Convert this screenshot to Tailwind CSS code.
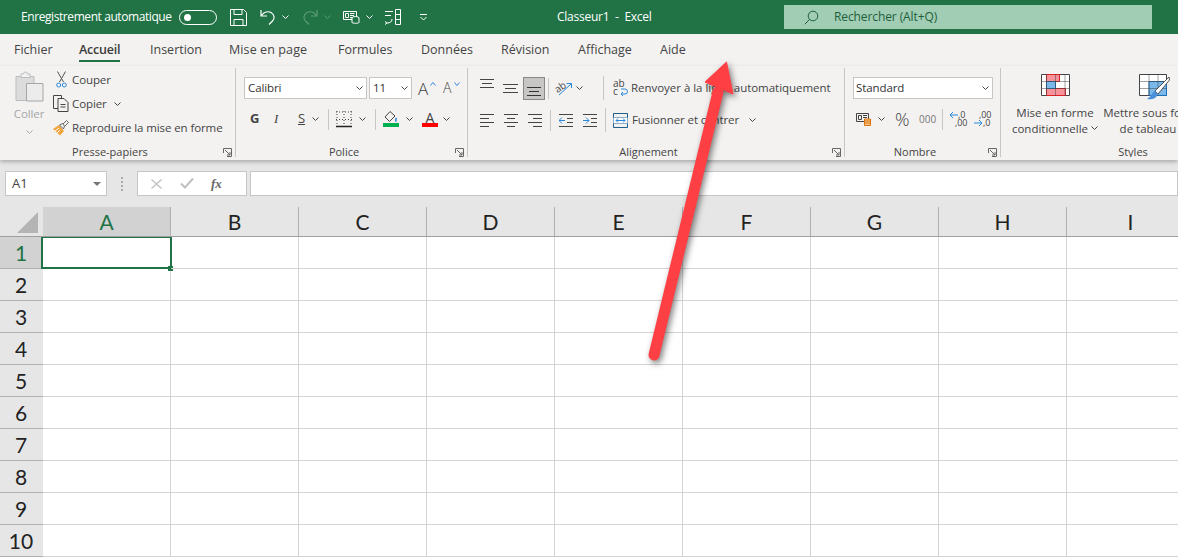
<!DOCTYPE html>
<html lang="fr">
<head>
<meta charset="UTF-8">
<title>Classeur1 - Excel</title>
<script src="https://cdn.jsdelivr.net/npm/@tailwindcss/browser@4"></script>
</head>
<body class="relative w-[1178px] h-[560px] overflow-hidden bg-white font-['Open_Sans',sans-serif] text-[12px] text-[#444]">

<!-- Title bar -->
<div class="flex items-center h-[34px] bg-[#217346] text-white">
  <div class="flex items-center w-[557px] h-full pl-[21px]">
    <span class="w-[158px] tracking-[-0.42px] whitespace-nowrap">Enregistrement automatique</span>
    <div class="flex items-center w-[38px] h-[15px] rounded-full border border-white pl-[4px]"><div class="w-[7px] h-[7px] rounded-full bg-white"></div></div>
    <svg class="ml-[13px]" width="17" height="17" viewBox="0 0 17 17" fill="none" stroke="#fff"><path d="M.5.5h13l3 3v13H.5z M4 .5v5h8v-5 M4 16.5v-6h9v6"/></svg>
    <svg class="ml-[13px]" width="16" height="16" viewBox="0 0 16 16" fill="none" stroke="#fff" stroke-width="1.2"><path d="M1 1v6h6 M1.500 6.500C4 3 8 2 11 3.500c3.500 2 4 6 1.500 8.500L9 15.500"/></svg>
    <svg class="ml-[6px]" width="7" height="4" viewBox="0 0 7 4" fill="none" stroke="#fff"><path d="M.5.5l3 3 3-3"/></svg>
    <svg class="ml-[13px]" width="16" height="16" viewBox="0 0 16 16" fill="none" stroke="#5c9b78" stroke-width="1.2"><path d="M15 1v6H9 M14.500 6.500C12 3 8 2 5 3.500c-3.500 2-4 6-1.500 8.500L7 15.500"/></svg>
    <svg class="ml-[6px]" width="7" height="4" viewBox="0 0 7 4" fill="none" stroke="#5c9b78"><path d="M.5.500l3 3 3-3"/></svg>
    <svg class="ml-[12px]" width="17" height="14" viewBox="0 0 17 14" fill="none" stroke="#fff"><path d="M.5 1.500h13v8H.5z M2.500 3.500h3v4h-3z M7 3.500h4.500 M7 5.500h4 M7 7.500h2"/><ellipse cx="12.500" cy="8" rx="3.500" ry="1.500" fill="#217346"/><path d="M9 8v4.500c0 1 7 1 7 0V8" fill="#217346"/></svg>
    <svg class="ml-[6px]" width="7" height="4" viewBox="0 0 7 4" fill="none" stroke="#fff"><path d="M.5.500l3 3 3-3"/></svg>
    <svg class="ml-[11px]" width="17" height="16" viewBox="0 0 17 16" fill="none" stroke="#fff"><path d="M1 2.500h8 M1 6.500h6 M11.500.5h5v15h-5z M11.500 5.500h5 M11.500 10.500h5 M8 10c0 3-2 4-5 4 M1 12.500l2 1.500-2 1.500"/></svg>
    <svg class="ml-[18px]" width="9" height="7" viewBox="0 0 9 7" fill="none" stroke="#fff"><path d="M1 .5h7 M1.500 3l3 3 3-3"/></svg>
  </div>
  <div class="w-[227px] tracking-[-0.25px] whitespace-pre">Classeur1  -  Excel</div>
  <div class="flex items-center w-[368px] h-[24px] bg-[#a0cdb3] text-[#1f5f3c] tracking-[-0.1px]">
    <svg class="ml-[20px] mr-[15px]" width="15" height="15" viewBox="0 0 15 15" fill="none" stroke="#1f5f3c"><circle cx="9" cy="6" r="4.800"/><path d="M5.500 9.500L.8 14.200"/></svg>
    <span>Rechercher (Alt+Q)</span>
  </div>
</div>

<!-- Ribbon tabs -->
<div class="flex h-[32px] pl-[14px] pt-[7px] bg-[#f3f2f1] text-[12.500px] whitespace-nowrap">
  <span class="w-[65px]">Fichier</span>
  <span class="w-[71px]"><span class="inline-block h-[21px] border-b-[2px] border-[#217346] font-semibold text-[#3b3b3b] tracking-[-0.2px]">Accueil</span></span>
  <span class="w-[79px]">Insertion</span>
  <span class="w-[109px] tracking-[0.1px]">Mise en page</span>
  <span class="w-[83px]">Formules</span>
  <span class="w-[80px]">Données</span>
  <span class="w-[77px]">Révision</span>
  <span class="w-[82px]">Affichage</span>
  <span>Aide</span>
</div>

<!-- Ribbon -->
<div class="relative z-10 flex h-[94px] pt-[2px] bg-[#f3f2f1] shadow-[0_2px_4px_rgba(0,0,0,0.25)] text-[11.500px] tracking-[-0.1px] whitespace-nowrap">

  <!-- Presse-papiers -->
  <div class="flex flex-col shrink-0 w-[236px] h-[89px] border-r border-[#c8c6c4]">
    <div class="flex flex-1">
      <div class="flex flex-col items-center w-[53px] pl-[5px] pt-[3px] text-[#a6a6a6]">
        <svg width="29" height="32" viewBox="0 0 29 32" fill="none"><path d="M1 5.500h18v24H1z" fill="#dcdcdc" stroke="#bdbdbd"/><path d="M6 5.500V3h2.500a2 2 0 0 1 4 0H15v3.500H6z" fill="#f3f2f1" stroke="#bdbdbd"/><path d="M11.500 12.500h16.500v17.500H11.500z" fill="#ececec" stroke="#a6a6a6"/></svg>
        <span class="mt-[2px]">Coller</span>
        <svg class="mt-[8px]" width="7" height="4" viewBox="0 0 7 4" fill="none" stroke="#a6a6a6"><path d="M.5.500l3 3 3-3"/></svg>
      </div>
      <div class="flex flex-col gap-[5px] pt-[2px]">
        <div class="flex items-center h-[19px]">
          <svg class="ml-[3px] mr-[5px]" width="11" height="17" viewBox="0 0 11 17" fill="none"><path d="M1.500.5L7.500 11 M9.500.5L3.500 11" stroke="#555"/><circle cx="2.700" cy="14" r="2" stroke="#2b88d8"/><circle cx="8.300" cy="14" r="2" stroke="#2b88d8"/></svg>
          <span>Couper</span>
        </div>
        <div class="flex items-center h-[19px]">
          <svg class="mr-[3px]" width="16" height="17" viewBox="0 0 16 17" fill="none" stroke="#444"><path d="M5 13.500H.5V.5h8v3"/><path d="M5 3.500h6l4 4v9H5z M7.500 9.500h5 M7.500 12h5"/></svg>
          <span>Copier</span>
          <svg class="ml-[7px]" width="7" height="4" viewBox="0 0 7 4" fill="none" stroke="#444"><path d="M.5.500l3 3 3-3"/></svg>
        </div>
        <div class="flex items-center h-[19px]">
          <svg class="mr-[3px]" width="16" height="16" viewBox="0 0 16 16"><path d="M0 9l6-4 5 6-4 4.500z" fill="#f2a33a"/><path d="M2 11l4-3 M4 13l3-3" stroke="#fff"/><path d="M6.500 5l3-1.500 2 2.500-1 3z" fill="#f3f2f1" stroke="#666"/><path d="M10 4l3.500-3.500 2 2L12 6" fill="none" stroke="#666"/></svg>
          <span>Reproduire la mise en forme</span>
        </div>
      </div>
    </div>
    <div class="flex items-center h-[12px] pt-[2px] text-[11px] tracking-normal">
      <span class="flex-1 pr-[3px] text-center">Presse-papiers</span>
      <svg class="mr-[3px]" width="9" height="9" viewBox="0 0 9 9" fill="none" stroke="#666"><path d="M.5 5V.5h8v8H4 M2 2l5 5 M7 4v3H4"/></svg>
    </div>
  </div>

  <!-- Police -->
  <div class="flex flex-col shrink-0 w-[232px] h-[89px] border-r border-[#c8c6c4]">
    <div class="flex-1 pl-[8px] pt-[9px]">
      <div class="flex items-center h-[22px]">
        <div class="flex items-center justify-between w-[123px] h-full px-[3px] bg-white border border-[#c8c6c4] text-[#333]">Calibri
          <svg width="7" height="4" viewBox="0 0 7 4" fill="none" stroke="#444"><path d="M.5.500l3 3 3-3"/></svg></div>
        <div class="flex items-center justify-between w-[43px] h-full ml-[2px] px-[3px] bg-white border border-[#c8c6c4] text-[#333]">11
          <svg width="7" height="4" viewBox="0 0 7 4" fill="none" stroke="#444"><path d="M.5.500l3 3 3-3"/></svg></div>
        <span class="ml-[6px] w-[11px] text-[17px] leading-none font-light">A</span>
        <svg class="mb-[9px] ml-[1px]" width="6" height="4" viewBox="0 0 6 4" fill="none" stroke="#2b88d8"><path d="M.5 3.500l2.500-3 2.500 3"/></svg>
        <span class="ml-[7px] w-[10px] text-[14px] leading-none font-light">A</span>
        <svg class="mb-[9px] ml-[1px]" width="6" height="4" viewBox="0 0 6 4" fill="none" stroke="#2b88d8"><path d="M.5.500l2.500 3 2.500-3"/></svg>
      </div>
      <div class="flex items-center h-[22px] mt-[9px] text-[#444]">
        <span class="ml-[6px] w-[24px] text-[13px] font-bold">G</span>
        <span class="w-[24px] text-[13px] italic font-['Liberation_Serif',serif]">I</span>
        <span class="w-[14px] text-[13px] underline">S</span>
        <svg class="mr-[9px]" width="7" height="4" viewBox="0 0 7 4" fill="none" stroke="#444"><path d="M.5.500l3 3 3-3"/></svg>
        <div class="w-px h-[21px] bg-[#c8c6c4] mr-[7px]"></div>
        <svg width="16" height="17" viewBox="0 0 16 17" fill="none" stroke="#444"><path d="M0 1h16M0 8.500h16M8 0v15M1 0v15M15 0v15" stroke-dasharray="1 2"/><path d="M0 15.500h16" stroke-width="1.500" stroke="#222"/></svg>
        <svg class="ml-[7px] mr-[9px]" width="7" height="4" viewBox="0 0 7 4" fill="none" stroke="#444"><path d="M.5.500l3 3 3-3"/></svg>
        <div class="w-px h-[21px] bg-[#c8c6c4] mr-[7px]"></div>
        <div class="flex flex-col items-center w-[16px]">
          <svg width="14" height="12" viewBox="0 0 14 12" fill="none"><path d="M6 .5L1 6l4.500 4.500L11 5z" stroke="#444"/><path d="M12.500 7c-1 1.500-1 3 0 3.500" stroke="#2b88d8" stroke-width="1.500"/></svg>
          <div class="w-full h-[4px] bg-[#00b050]"></div>
        </div>
        <svg class="ml-[7px] mr-[9px]" width="7" height="4" viewBox="0 0 7 4" fill="none" stroke="#444"><path d="M.5.500l3 3 3-3"/></svg>
        <div class="flex flex-col items-center w-[16px]">
          <span class="h-[12px] text-[14px] leading-[13px]">A</span>
          <div class="w-full h-[4px] bg-[#ff0000]"></div>
        </div>
        <svg class="ml-[5px]" width="7" height="4" viewBox="0 0 7 4" fill="none" stroke="#444"><path d="M.5.500l3 3 3-3"/></svg>
      </div>
    </div>
    <div class="flex items-center h-[12px] pt-[2px] text-[11px] tracking-normal">
      <span class="flex-1 pr-[3px] text-center">Police</span>
      <svg class="mr-[3px]" width="9" height="9" viewBox="0 0 9 9" fill="none" stroke="#666"><path d="M.5 5V.5h8v8H4 M2 2l5 5 M7 4v3H4"/></svg>
    </div>
  </div>

  <!-- Alignement -->
  <div class="flex flex-col shrink-0 w-[377px] h-[89px] border-r border-[#c8c6c4]">
    <div class="flex-1 pl-[12px] pt-[8px]">
      <div class="flex items-center h-[24px]">
        <svg width="14" height="9" class="mb-[9px]" viewBox="0 0 14 9" stroke="#444"><path d="M0 .5h14M2 4.500h10M0 8.500h14"/></svg>
        <svg width="15" height="9" class="ml-[9px]" viewBox="0 0 15 9" stroke="#444"><path d="M0 .5h15M2 4.500h11M0 8.500h15"/></svg>
        <div class="flex items-end justify-center w-[22px] h-[23px] ml-[5px] pb-[3px] bg-[#c8c6c4] border border-[#8a8886]"><svg width="14" height="9" viewBox="0 0 14 9" stroke="#333"><path d="M0 .5h14M2 4.500h10M0 8.500h14"/></svg></div>
        <div class="w-px h-[21px] ml-[3px] bg-[#c8c6c4]"></div>
        <svg class="ml-[7px] overflow-visible" width="17" height="17" viewBox="0 0 17 17" fill="none"><text x="-1" y="11" font-size="10" fill="#444" transform="rotate(-35 4 8)">ab</text><path d="M3 15L15 4 M10.500 3.500H15.500V8" stroke="#2b88d8"/></svg>
        <svg class="ml-[3px]" width="7" height="4" viewBox="0 0 7 4" fill="none" stroke="#444"><path d="M.5.500l3 3 3-3"/></svg>
        <div class="w-px h-[24px] ml-[20px] bg-[#c8c6c4]"></div>
        <svg class="ml-[9px] mr-[3px] overflow-visible" width="15" height="16" viewBox="0 0 15 16" fill="none"><text x="0" y="7" font-size="10" fill="#444">ab</text><text x="0" y="15" font-size="10" fill="#444">c</text><path d="M8 14h4a2.500 2.500 0 0 0 0-5H8 M10 12l-2 2 2 2" stroke="#2b88d8"/></svg>
        <span class="tracking-[-0.03px]">Renvoyer à la ligne automatiquement</span>
      </div>
      <div class="flex items-center h-[24px] mt-[8px]">
        <svg width="14" height="13" viewBox="0 0 14 13" stroke="#444"><path d="M0 .5h14M0 4.500h9M0 8.500h14M0 12.500h9"/></svg>
        <svg width="14" height="13" class="ml-[10px]" viewBox="0 0 14 13" stroke="#444"><path d="M0 .5h14M3 4.500h8M0 8.500h14M3 12.500h8"/></svg>
        <svg width="14" height="13" class="ml-[10px]" viewBox="0 0 14 13" stroke="#444"><path d="M0 .5h14M5 4.500h9M0 8.500h14M5 12.500h9"/></svg>
        <div class="w-px h-[21px] ml-[8px] bg-[#c8c6c4]"></div>
        <svg class="ml-[8px]" width="14" height="13" viewBox="0 0 14 13" fill="none"><path d="M0 .5h14M8 4.500h6M8 8.500h6M0 12.500h14" stroke="#444"/><path d="M6 6.500H0M3 3.500l-3 3 3 3" stroke="#2b88d8"/></svg>
        <svg class="ml-[10px]" width="14" height="13" viewBox="0 0 14 13" fill="none"><path d="M0 .5h14M8 4.500h6M8 8.500h6M0 12.500h14" stroke="#444"/><path d="M0 6.500h6M3 3.500l3 3-3 3" stroke="#2b88d8"/></svg>
        <div class="w-px h-[24px] ml-[8px] bg-[#c8c6c4]"></div>
        <svg class="ml-[7px] mr-[4px]" width="15" height="15" viewBox="0 0 15 15" fill="none"><path d="M.5.5h14v14H.5z M.5 4.500h14 M.5 10.500h14" stroke="#1c5f8f"/><path d="M.5 4.500h14v6H.5z" fill="#fff"/><path d="M3 7.500h9M5 5.500l-2 2 2 2M10 5.500l2 2-2 2" stroke="#2b88d8"/></svg>
        <span>Fusionner et centrer</span>
        <svg class="ml-[10px]" width="7" height="4" viewBox="0 0 7 4" fill="none" stroke="#444"><path d="M.5.500l3 3 3-3"/></svg>
      </div>
    </div>
    <div class="flex items-center h-[12px] pt-[2px] text-[11px] tracking-normal">
      <span class="flex-1 pr-[3px] text-center">Alignement</span>
      <svg class="mr-[3px]" width="9" height="9" viewBox="0 0 9 9" fill="none" stroke="#666"><path d="M.5 5V.5h8v8H4 M2 2l5 5 M7 4v3H4"/></svg>
    </div>
  </div>

  <!-- Nombre -->
  <div class="flex flex-col shrink-0 w-[156px] h-[89px] border-r border-[#c8c6c4]">
    <div class="flex-1 pl-[8px] pt-[9px]">
      <div class="flex items-center justify-between w-[140px] h-[22px] px-[2px] pr-[3px] bg-white border border-[#c8c6c4] text-[#333]">Standard
        <svg width="7" height="4" viewBox="0 0 7 4" fill="none" stroke="#444"><path d="M.5.500l3 3 3-3"/></svg></div>
      <div class="flex items-center h-[22px] mt-[9px]">
        <svg class="ml-[3px]" width="16" height="14" viewBox="0 0 16 14" fill="none"><path d="M.5 1.500h12v8H.5z M2.500 3.500h3v4h-3z M7 3.500h4 M7 5.500h4" stroke="#444"/><path d="M8.500 7h6v6.500h-6z" fill="#f9c98a" stroke="#d9730d"/><path d="M8.500 9h6M8.500 11h6" stroke="#d9730d"/></svg>
        <svg class="ml-[6px]" width="7" height="4" viewBox="0 0 7 4" fill="none" stroke="#444"><path d="M.5.500l3 3 3-3"/></svg>
        <span class="ml-[10px] w-[24px] text-[18px] leading-none font-light">%</span>
        <span class="w-[23px] text-[10px] text-[#777] tracking-normal">000</span>
        <div class="w-px h-[21px] bg-[#c8c6c4]"></div>
        <svg class="ml-[7px] overflow-visible" width="16" height="16" viewBox="0 0 16 16" fill="none"><text x="8" y="7" font-size="9" fill="#444">,0</text><text x="5" y="15" font-size="9" fill="#444">,00</text><path d="M8 4H0M3 1L0 4l3 3" stroke="#2b88d8"/></svg>
        <svg class="ml-[8px] overflow-visible" width="16" height="16" viewBox="0 0 16 16" fill="none"><text x="5" y="7" font-size="9" fill="#444">,00</text><text x="9" y="15" font-size="9" fill="#444">,0</text><path d="M0 12h8M5 9l3 3-3 3" stroke="#2b88d8"/></svg>
      </div>
    </div>
    <div class="flex items-center h-[12px] pt-[2px] text-[11px] tracking-normal">
      <span class="flex-1 pr-[3px] text-center">Nombre</span>
      <svg class="mr-[3px]" width="9" height="9" viewBox="0 0 9 9" fill="none" stroke="#666"><path d="M.5 5V.5h8v8H4 M2 2l5 5 M7 4v3H4"/></svg>
    </div>
  </div>

  <!-- Styles -->
  <div class="flex flex-col shrink-0 w-[177px] h-[89px] overflow-hidden">
    <div class="flex flex-1 pt-[6px] text-center leading-[15.500px]">
      <div class="flex flex-col items-center shrink-0 w-[92px] ml-[8px]">
        <svg width="29" height="23" viewBox="0 0 29 23" fill="none"><path d="M.5.5h28v21H.5z" fill="#fff" stroke="#444"/><path d="M5.500.5h13v7h-13zM5.500 14.500h19v7h-19z" fill="#f7929a" stroke="#e02020"/><path d="M5.500 7.500h9v7h-9z" fill="#7ab8ea" stroke="#1c6fb8"/><path d="M5.500 0v22M14.500 0v22M24 0v22M0 7.500h29M0 14.500h29" stroke="#444" stroke-width=".5"/></svg>
        <span class="mt-[8px] tracking-normal">Mise en forme</span>
        <span class="flex items-center gap-[3px] tracking-normal">conditionnelle<svg width="7" height="4" viewBox="0 0 7 4" fill="none" stroke="#444"><path d="M.5.500l3 3 3-3"/></svg></span>
      </div>
      <div class="flex flex-col items-center shrink-0 w-[100px] ml-[2px]">
        <svg class="ml-[2px]" width="31" height="27" viewBox="0 0 31 27" fill="none"><path d="M.5.500h27v21H.5z" fill="#fff" stroke="#444"/><path d="M10 7.500h17.500v14H10z" fill="#7ab8ea" stroke="#1c6fb8"/><path d="M10 0v22M19 0v22M0 7.500h28M0 14.500h28" stroke="#444" stroke-width=".5"/><path d="M30 3L16 17l3 3L30.500 6z" fill="#fff" stroke="#555"/><path d="M8 25c4 1 9 0 11-5l-3-3c-3 1-3 5-8 8z" fill="#4a90d9"/></svg>
        <span class="mt-[4px] tracking-normal">Mettre sous forme</span>
        <span class="flex items-center gap-[3px] tracking-normal">de tableau<svg width="7" height="4" viewBox="0 0 7 4" fill="none" stroke="#444"><path d="M.5.500l3 3 3-3"/></svg></span>
      </div>
    </div>
    <div class="flex items-center justify-center h-[12px] pt-[2px] pl-[87px] text-[11px] tracking-normal">Styles</div>
  </div>
</div>

<!-- Formula bar -->
<div class="flex h-[47px] pt-[11px] bg-[#e6e6e6] text-[13px]">
  <div class="flex items-center justify-between w-[102px] h-[25px] ml-[5px] pl-[6px] pr-[5px] bg-white border border-[#c6c6c6]">A1
    <div class="w-0 h-0 border-x-[4px] border-x-transparent border-t-[4px] border-t-[#777]"></div>
  </div>
  <div class="flex flex-col items-center justify-center gap-[2px] w-[30px] h-[25px]">
    <div class="w-[2px] h-[2px] bg-[#aaa]"></div><div class="w-[2px] h-[2px] bg-[#aaa]"></div><div class="w-[2px] h-[2px] bg-[#aaa]"></div><div class="w-[2px] h-[2px] bg-[#aaa]"></div>
  </div>
  <div class="flex items-center w-[110px] h-[25px] pl-[13px] bg-white border border-[#c6c6c6]">
    <svg width="11" height="10" viewBox="0 0 11 10" stroke="#c0c0c0" stroke-width="1.300"><path d="M.5.5l10 9M10.500.5l-10 9"/></svg>
    <svg class="ml-[18px]" width="14" height="11" viewBox="0 0 14 11" fill="none" stroke="#c0c0c0" stroke-width="2"><path d="M1 5.500l4 4 8-9"/></svg>
    <span class="ml-[17px] text-[13px] italic font-bold font-['Liberation_Serif',serif] text-[#666]">fx</span>
  </div>
  <div class="flex-1 h-[25px] ml-[3px] bg-white border border-[#c6c6c6]"></div>
</div>

<!-- Column headers -->
<div id="colHeaders" class="flex h-[30px] w-[1178px] overflow-hidden bg-[#e6e6e6] border-b border-[#9f9f9f] font-['Lato',sans-serif] text-[21px] text-[#222]">
  <div class="flex items-end justify-end w-[43px] shrink-0 pr-[5px] pb-[3px]">
    <div class="w-0 h-0 border-l-[21px] border-l-transparent border-b-[21px] border-b-[#b4b4b4]"></div>
  </div>
</div>

<!-- Sheet grid -->
<div id="rows" class="w-[1178px] overflow-hidden font-['Lato',sans-serif] text-[21px] text-[#222]"></div>

<!-- Red arrow annotation -->
<svg class="absolute left-0 top-0 z-20 pointer-events-none drop-shadow-[2px_3px_3px_rgba(0,0,0,0.5)]" width="1178" height="560" viewBox="0 0 1178 560" fill="none">
  <path d="M654 355L718 92" stroke="#fe4045" stroke-width="11" stroke-linecap="round"/>
  <path d="M726.500 62L705 82L733 94z" fill="#fe4045" stroke="#fe4045" stroke-linejoin="round"/>
</svg>

<script>
  // Fill in the column headers and the cells
  const cols = ['A', 'B', 'C', 'D', 'E', 'F', 'G', 'H', 'I'];
  const colHeaders = document.getElementById('colHeaders');
  const rows = document.getElementById('rows');

  cols.forEach((c, i) => {
    const head = document.createElement('div');
    head.className = i === 0
      ? 'flex items-center justify-center w-[128px] shrink-0 bg-[#d2d2d2] border-r border-[#b0b0b0] text-[#217346]'
      : 'flex items-center justify-center w-[128px] shrink-0 border-r border-[#b0b0b0]';
    head.textContent = c;
    colHeaders.appendChild(head);
  });

  for (let r = 1; r <= 10; r++) {
    const row = document.createElement('div');
    row.className = r === 1 ? 'relative z-10 flex h-[32px]' : 'flex h-[32px]';
    const num = document.createElement('div');
    num.className = r === 1
      ? 'flex items-center justify-center w-[43px] shrink-0 pr-px bg-[#d2d2d2] border-b border-[#b0b0b0] text-[#217346]'
      : 'flex items-center justify-center w-[43px] shrink-0 pr-px bg-[#e6e6e6] border-b border-[#b0b0b0]';
    num.textContent = r;
    row.appendChild(num);
    cols.forEach((c, i) => {
      const cell = document.createElement('div');
      cell.className = 'relative w-[128px] shrink-0 border-r border-b border-[#d4d4d4]';
      if (r === 1 && i === 0) {
        cell.innerHTML = '<div class="absolute -left-[2px] -top-px w-[131px] h-[33px] border-2 border-[#217346]"></div><div class="absolute -right-[3px] -bottom-[3px] w-[5px] h-[5px] bg-[#217346]"></div>';
      }
      row.appendChild(cell);
    });
    rows.appendChild(row);
  }
</script>
</body>
</html>
